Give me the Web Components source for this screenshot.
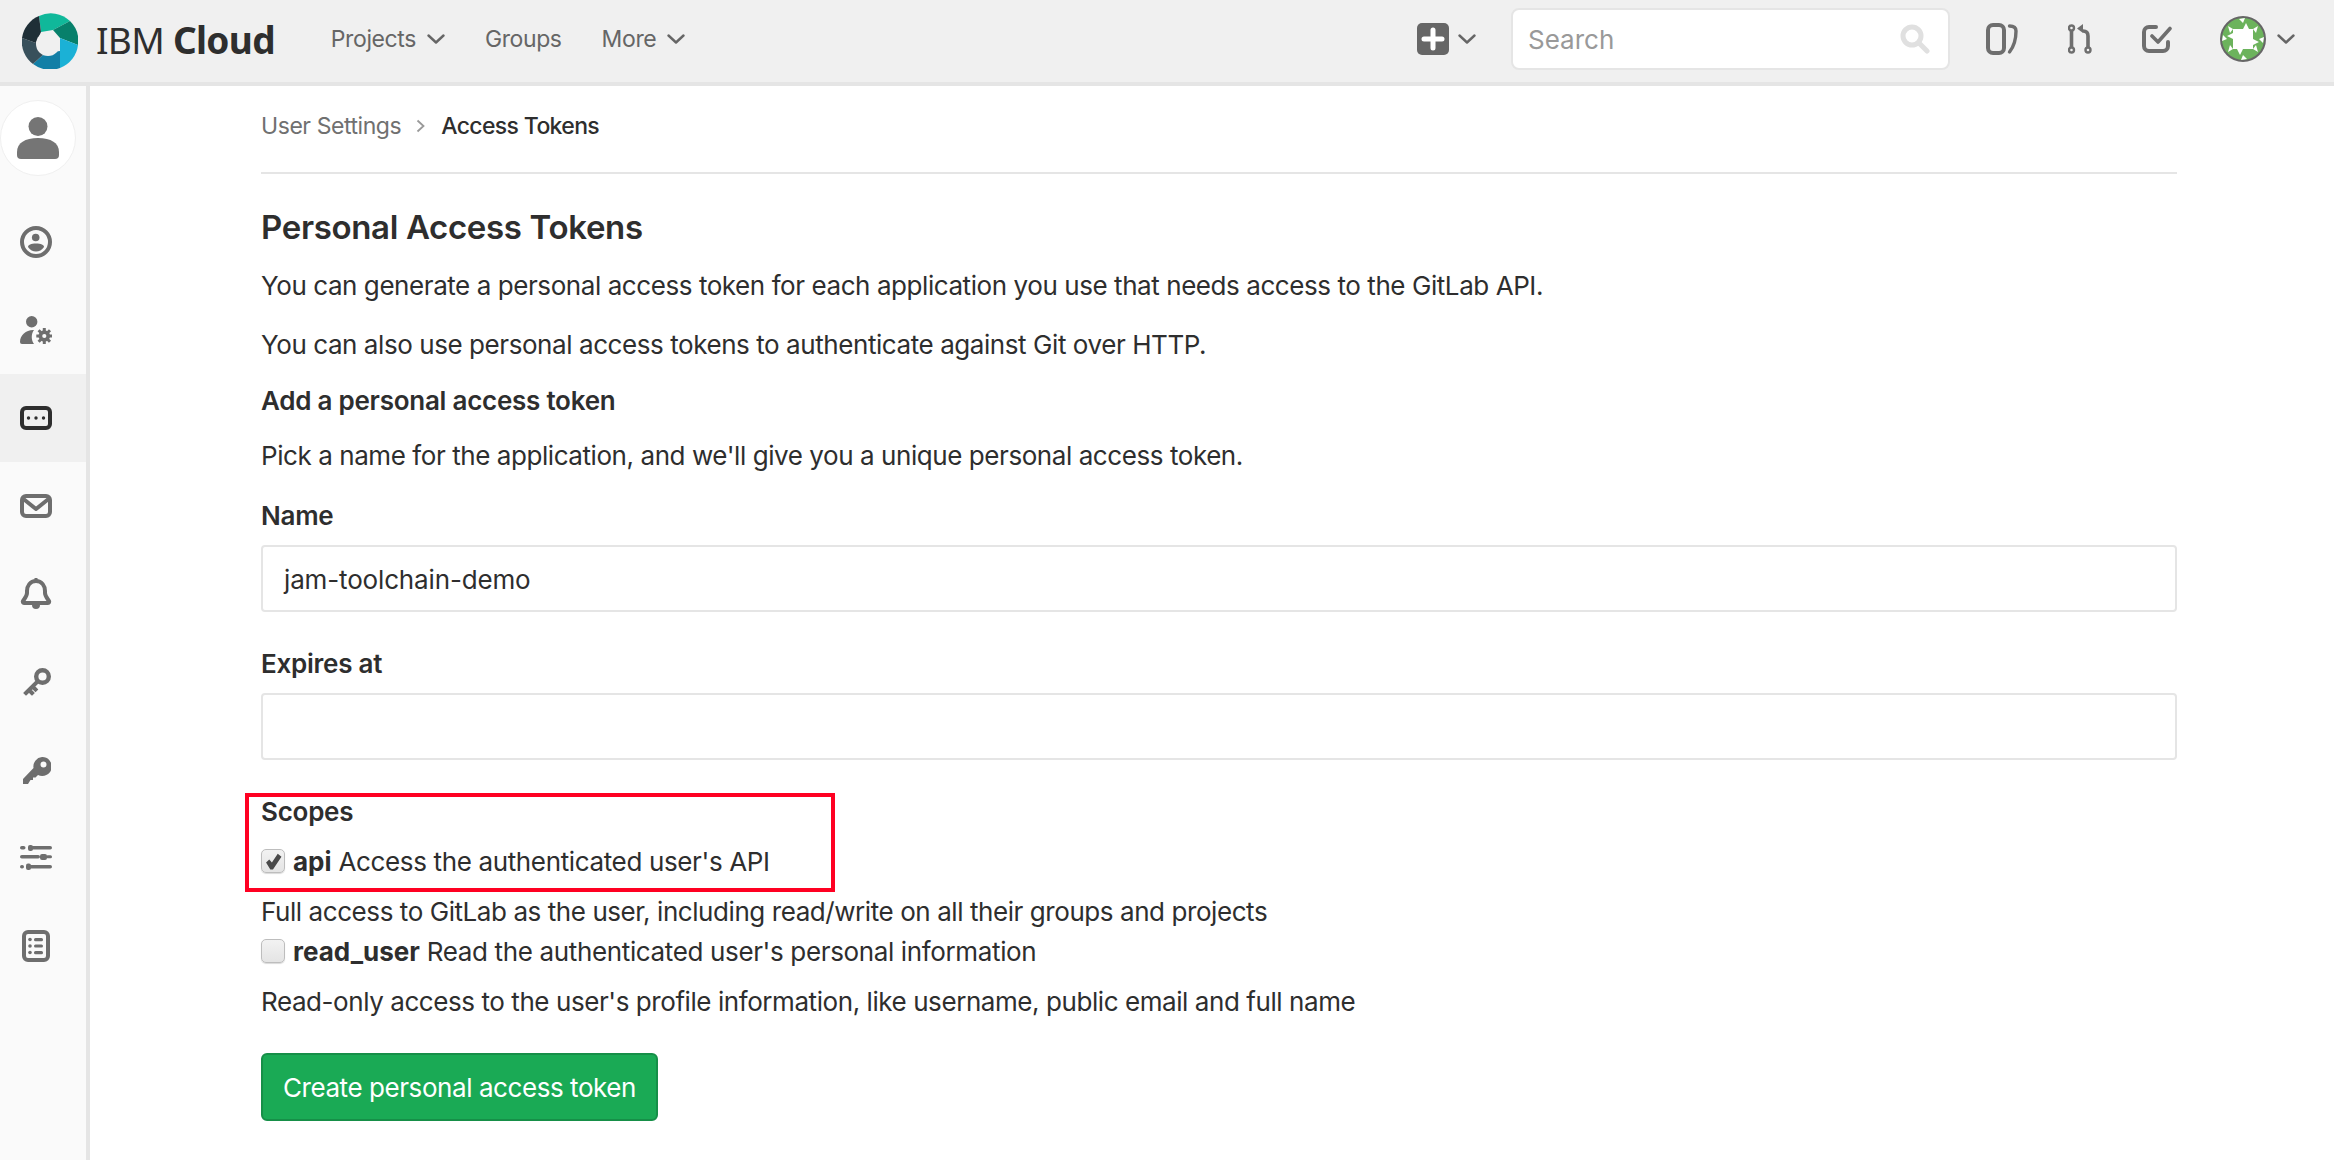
<!DOCTYPE html>
<html>
<head>
<meta charset="utf-8">
<title>Access Tokens</title>
<style>
    html, body { margin: 0; padding: 0; background: #fff; }
    body { font-family: Inter, "Liberation Sans", sans-serif; color: #2e2e2e; font-size: 26px; }
</style>
</head>
<body>
<app-shell>
    <top-bar slot="top"></top-bar>
    <side-nav slot="side"></side-nav>
    <token-page></token-page>
</app-shell>

<script>
const chevron = `<svg width="18" height="10" viewBox="0 0 18 10" fill="none" stroke="#666" stroke-width="2.4" stroke-linecap="round" stroke-linejoin="round"><path d="M1.5 1.5 9 8.5l7.5-7"/></svg>`;

class AppShell extends HTMLElement {
    constructor() {
        super();
        this.attachShadow({ mode: 'open' });
        this.shadowRoot.innerHTML = `
            <style>
                :host { display: block; height: 1160px; overflow: hidden; }
                .body { display: flex; height: 1074px; }
                main { flex: 1; min-width: 0; }
            </style>
            <slot name="top"></slot>
            <div class="body">
                <slot name="side"></slot>
                <main><slot></slot></main>
            </div>
        `;
    }
}

class NavLink extends HTMLElement {
    constructor() {
        super();
        this.attachShadow({ mode: 'open' });
        this.shadowRoot.innerHTML = `
            <style>
                :host { display: flex; align-items: center; gap: 11px; color: #666; font-size: 23px; letter-spacing: -0.4px; }
            </style>
            <slot></slot>
            ${this.hasAttribute('menu') ? chevron : ''}
        `;
    }
}

class TopBar extends HTMLElement {
    constructor() {
        super();
        this.attachShadow({ mode: 'open' });
        this.shadowRoot.innerHTML = `
            <style>
                :host {
                    display: flex; align-items: center; box-sizing: border-box; height: 86px;
                    background: #f0f0f0; border-bottom: 4px solid #e5e5e5; padding: 0 0 4px 22px;
                }
                .logo { margin-top: 4px; }
                .brand { margin-left: 18px; font: 37px "Noto Sans", sans-serif; letter-spacing: -0.7px; color: #2e2e2e; white-space: nowrap; }
                .brand b { font-weight: 700; }
                .links { display: flex; gap: 40px; margin-left: 56px; }
                .add { display: flex; align-items: center; gap: 9px; margin-left: auto; }
                .search {
                    box-sizing: border-box; display: flex; align-items: center; justify-content: space-between;
                    width: 439px; height: 62px; margin-left: 35px; padding: 0 18px 0 15px;
                    background: #fff; border: 2px solid #e5e5e5; border-radius: 8px;
                    color: #999; font-size: 26px;
                }
                .tools { display: flex; align-items: center; margin: 0 39px 0 36px; }
                .tools svg { display: block; }
                .mr { margin-left: 50px; }
                .todo { margin-left: 50px; }
                .me { margin-left: 48px; }
                .tools .chev { margin-left: 11px; }
            </style>
            <svg class="logo" width="56" height="56" viewBox="0 0 56 56">
                <path fill="#10b89a" d="M17 3A28 28 0 0 1 48 8L31 17 19 19Z"/>
                <path fill="#07806b" d="M48 8A28 28 0 0 1 56 32L38 25 31 17Z"/>
                <path fill="#1bb1d6" d="M56 32A28 28 0 0 1 38 55L38 38 38 25Z"/>
                <path fill="#137fa6" d="M38 55A28 28 0 0 1 11 51L23 40 38 38Z"/>
                <path fill="#38505b" d="M11 51A28 28 0 0 1 0 25L14 30 23 40Z"/>
                <path fill="#1f2f37" d="M0 25A28 28 0 0 1 17 3L19 19 14 30Z"/>
                <circle cx="26" cy="31" r="12" fill="#f0f0f0"/>
            </svg>
            <span class="brand">IBM <b>Cloud</b></span>
            <div class="links">
                <nav-link menu>Projects</nav-link>
                <nav-link>Groups</nav-link>
                <nav-link menu>More</nav-link>
            </div>
            <div class="add">
                <svg width="32" height="32" viewBox="0 0 32 32"><rect width="32" height="32" rx="5" fill="#666"/><path d="M16 7v18M7 16h18" stroke="#fff" stroke-width="5" stroke-linecap="round"/></svg>
                ${chevron}
            </div>
            <div class="search">
                <span>Search</span>
                <svg width="30" height="30" viewBox="0 0 30 30" fill="none" stroke="#e0e0e0"><circle cx="12" cy="12" r="9" stroke-width="5"/><path d="M19 19l8 8" stroke-width="5" stroke-linecap="round"/></svg>
            </div>
            <div class="tools">
                <svg width="32" height="32" viewBox="0 0 32 32" fill="none" stroke="#6e6e6e" stroke-width="4" stroke-linecap="round">
                    <rect x="2" y="2" width="16" height="28" rx="5"/>
                    <path d="M23.500 3Q30 3 30 8C30 16 27.500 24 23.500 29" stroke-width="3.400"/>
                </svg>
                <svg class="mr" width="24" height="30" viewBox="0 0 24 30" fill="none" stroke="#6e6e6e" stroke-width="2.400">
                    <circle cx="3.500" cy="4" r="2.500"/><circle cx="3.500" cy="26" r="2.500"/><circle cx="20" cy="26" r="2.500"/>
                    <path d="M3.500 7v16M20 23V12q0-5-5-5" stroke-width="3.600"/>
                    <path d="M9 4.500 15 0v9z" fill="#6e6e6e" stroke="none"/>
                </svg>
                <svg class="todo" width="30" height="28" viewBox="0 0 30 28" fill="none" stroke="#6e6e6e" stroke-width="4" stroke-linecap="round" stroke-linejoin="round">
                    <path d="M14 2H7a5 5 0 0 0-5 5v14a5 5 0 0 0 5 5h14a5 5 0 0 0 5-5v-4"/>
                    <path d="M10 11l6 6L28 3.500" stroke-width="3.600"/>
                </svg>
                <svg class="me" width="46" height="46" viewBox="0 0 46 46">
                    <circle cx="23" cy="23" r="22" fill="#6cb35c" stroke="#666" stroke-width="2"/>
                    <rect x="13" y="13" width="20" height="20" fill="#fff"/>
                    <path fill="#fff" d="M13 17v6l-6-3zM33 23v6l6-3zM23 13h6l-3-6zM17 33h6l-3 6zM13 13 8 10l2 7zM33 13l5-3-2 7zM13 33l-5 3 2-7zM33 33l5 3-2-7zM3 19l4 4-5 2zM43 27l-4-4 5-2zM19 3l4 4 2-5zM27 43l-4-4-2 5z"/>
                </svg>
                <span class="chev">${chevron}</span>
            </div>
        `;
    }
}

class SideItem extends HTMLElement {
    constructor() {
        super();
        this.attachShadow({ mode: 'open' });
        this.shadowRoot.innerHTML = `
            <style>
                :host { display: flex; align-items: center; height: 88px; padding-left: 20px; }
                :host([active]) { background: #f0f0f0; }
            </style>
            <slot></slot>
        `;
    }
}

class SideNav extends HTMLElement {
    constructor() {
        super();
        this.attachShadow({ mode: 'open' });
        const s = 'fill="none" stroke="#6e6e6e" stroke-width="4"';
        this.shadowRoot.innerHTML = `
            <style>
                :host {
                    display: block; flex: none; box-sizing: border-box; width: 90px; height: 100%;
                    background: #fafafa; border-right: 4px solid #e5e5e5; padding-top: 14px;
                }
                .avatar {
                    display: flex; align-items: center; justify-content: center;
                    box-sizing: border-box; width: 76px; height: 76px; margin-bottom: 22px;
                    background: #fff; border: 1px solid #f0f0f0; border-radius: 50%;
                }
                svg { display: block; }
            </style>
            <div class="avatar">
                <svg width="42" height="42" viewBox="0 0 42 42" fill="#757575">
                    <ellipse cx="21" cy="9.500" rx="9.500" ry="9.500"/>
                    <path d="M0 35c0-9 8-14 21-14s21 5 21 14v3a4 4 0 0 1-4 4H4a4 4 0 0 1-4-4z"/>
                </svg>
            </div>
            <side-item>
                <svg width="32" height="32" viewBox="0 0 32 32">
                    <circle cx="16" cy="16" r="14" ${s}/>
                    <circle cx="15.700" cy="11.500" r="3.800" fill="#6e6e6e"/>
                    <path d="M8 21c0-2 3-3.500 8-3.500s8 1.500 8 3.500c-2 3-5 4.500-8 4.500s-6-1.500-8-4.500z" fill="#6e6e6e"/>
                </svg>
            </side-item>
            <side-item>
                <svg width="32" height="28" viewBox="0 0 32 28" fill="#6e6e6e">
                    <circle cx="11.700" cy="5.700" r="5.700"/>
                    <path d="M0 26c0-7 6-12 13-12h1c-3 4-3 10 0 14H2a2 2 0 0 1-2-2z"/>
                    <circle cx="24.300" cy="20" r="5.800"/>
                    <path d="M24.300 12v16M16.300 20h16M18.600 14.300l11.400 11.400M18.600 25.700l11.400-11.400" stroke="#6e6e6e" stroke-width="3"/>
                    <circle cx="24.300" cy="20" r="2.100" fill="#fafafa"/>
                </svg>
            </side-item>
            <side-item active>
                <svg width="32" height="24" viewBox="0 0 32 24">
                    <rect x="2" y="2" width="28" height="20" rx="4" fill="none" stroke="#2e2e2e" stroke-width="4"/>
                    <circle cx="8.500" cy="12" r="1.700" fill="#2e2e2e"/><circle cx="16" cy="12" r="1.700" fill="#2e2e2e"/><circle cx="23.500" cy="12" r="1.700" fill="#2e2e2e"/>
                </svg>
            </side-item>
            <side-item>
                <svg width="32" height="24" viewBox="0 0 32 24" ${s} stroke-linejoin="round">
                    <rect x="2" y="2" width="28" height="20" rx="4"/>
                    <path d="M3.500 5 16 15 28.500 5"/>
                </svg>
            </side-item>
            <side-item>
                <svg width="32" height="32" viewBox="0 0 32 32">
                    <path ${s} stroke-linejoin="round" d="M16 3c-6 0-9 5-9 10v2c0 3-2 5-4 8-.5 1 0 2 1 2h24c1 0 1.500-1 1-2-2-3-4-5-4-8v-2c0-5-3-10-9-10z"/>
                    <path d="M12 27h8a4 4 0 0 1-8 0zM14.500 0h3v3h-3z" fill="#6e6e6e"/>
                </svg>
            </side-item>
            <side-item>
                <svg width="28" height="29" viewBox="0 0 28 29" ${s} stroke-linecap="square" style="margin-left:3px">
                    <circle cx="19.500" cy="8.500" r="6.300" stroke-width="4.400"/>
                    <path d="M14.500 13.500 3 25M6 22l3 3M9.500 18.500l3 3" stroke-width="4"/>
                </svg>
            </side-item>
            <side-item>
                <svg width="28" height="27" viewBox="0 0 28 27" fill="#6e6e6e" style="margin-left:3px">
                    <path fill-rule="evenodd" d="M19 0a9.500 9.500 0 1 1-4 18l-2.500 2.500H10v2.500H7.500L5 27H0v-5L10.500 11A9.500 9.500 0 0 1 19 0zm1.500 4.500a3 3 0 1 0 0 6 3 3 0 0 0 0-6z"/>
                </svg>
            </side-item>
            <side-item>
                <svg width="32" height="26" viewBox="0 0 32 26" fill="#6e6e6e">
                    <rect y="1" width="5.500" height="3.600" rx="1.800"/><rect x="8" y="0" width="5" height="6" rx="2"/><rect x="11" y="1" width="21" height="3.600" rx="1.800"/>
                    <rect y="10" width="20" height="3.600" rx="1.800"/><rect x="20" y="9" width="7" height="6" rx="2"/><rect x="26" y="10.200" width="6" height="3" rx="1.500"/>
                    <rect y="20" width="4" height="3.600" rx="1.800"/><rect x="6" y="18.500" width="5" height="6.500" rx="2"/><rect x="9" y="20" width="23" height="3.600" rx="1.800"/>
                </svg>
            </side-item>
            <side-item>
                <svg width="28" height="32" viewBox="0 0 28 32" style="margin-left:2px">
                    <rect x="2" y="2" width="24" height="28" rx="4" ${s}/>
                    <g fill="#6e6e6e">
                        <circle cx="8" cy="9.500" r="1.800"/><circle cx="8" cy="16" r="1.800"/><circle cx="8" cy="22.500" r="1.800"/>
                        <rect x="12" y="8" width="9" height="3.200" rx="1.500"/><rect x="12" y="14.400" width="9" height="3.200" rx="1.500"/><rect x="12" y="21" width="9" height="3.200" rx="1.500"/>
                    </g>
                </svg>
            </side-item>
        `;
    }
}

class BreadCrumbs extends HTMLElement {
    constructor() {
        super();
        this.attachShadow({ mode: 'open' });
        this.shadowRoot.innerHTML = `
            <style>
                :host {
                    display: flex; align-items: center; box-sizing: border-box; height: 88px;
                    border-bottom: 2px solid #e5e5e5; font-size: 23px; color: #707070; padding-bottom: 6px;
                }
                svg { margin: 0 16px 0 15px; }
                b { font-weight: 500; color: #2e2e2e; letter-spacing: -0.65px; }
            </style>
            <span>User Settings</span>
            <svg width="9" height="14" viewBox="0 0 9 14" fill="none" stroke="#999" stroke-width="1.800"><path d="M1.500 1.500 7.500 7l-6 5.500"/></svg>
            <b>Access Tokens</b>
        `;
    }
}

class TextField extends HTMLElement {
    constructor() {
        super();
        this.attachShadow({ mode: 'open' });
        this.shadowRoot.innerHTML = `
            <style>
                :host {
                    display: flex; align-items: center; box-sizing: border-box; height: 67px;
                    padding: 2px 21px 0; background: #fff; border: 2px solid #e5e5e5; border-radius: 4px;
                    font-size: 26px; letter-spacing: -0.15px; color: #2e2e2e;
                }
            </style>
            <slot></slot>
        `;
    }
}

class CheckMark extends HTMLElement {
    constructor() {
        super();
        this.attachShadow({ mode: 'open' });
        this.shadowRoot.innerHTML = `
            <style>
                :host {
                    display: inline-flex; align-items: center; justify-content: center; flex: none;
                    box-sizing: border-box; width: 24px; height: 24px; border-radius: 5px;
                    background: linear-gradient(#f2f2f2, #e4e4e4); border: 1px solid #bdbdbd;
                    box-shadow: 0 1px 1px rgba(0,0,0,.15);
                }
            </style>
            ${this.hasAttribute('checked') ? `<svg width="17" height="17" viewBox="0 0 16 16"><path d="M1 9 4 6l2.500 3L12 .8l3.500 2.700L7.500 15.500H5z" fill="#4a4a4a"/></svg>` : ''}
        `;
    }
}

class ScopeRow extends HTMLElement {
    constructor() {
        super();
        this.attachShadow({ mode: 'open' });
        this.shadowRoot.innerHTML = `
            <style>
                :host { display: flex; align-items: center; gap: 8px; height: 36px; font-size: 26px; letter-spacing: -0.36px; color: #2e2e2e; }
                span { padding-top: 1px; }
                b { font-weight: 700; letter-spacing: 0; }
            </style>
            <check-mark ${this.hasAttribute('checked') ? 'checked' : ''}></check-mark>
            <span><b>${this.getAttribute('name')}</b> <slot></slot></span>
        `;
    }
}

class TokenPage extends HTMLElement {
    constructor() {
        super();
        this.attachShadow({ mode: 'open' });
        this.shadowRoot.innerHTML = `
            <style>
                :host { display: block; padding: 0 157px 0 171px; font-size: 26px; line-height: 36px; letter-spacing: -0.43px; color: #2e2e2e; }
                h1 { margin: 32px 0 0; padding-top: 1px; box-sizing: border-box; height: 40px; font-size: 33px; line-height: 40px; font-weight: 600; letter-spacing: -0.34px; }
                p, label { display: block; margin: 0; box-sizing: border-box; height: 36px; padding-top: 1px; white-space: nowrap; }
                label { font-weight: 600; letter-spacing: -0.25px; }
                .scopes { position: relative; margin-top: 33px; }
                .mark {
                    position: absolute; left: -16px; top: 0; width: 590px; height: 99px;
                    box-sizing: border-box; border: 4px solid #ff0022; pointer-events: none;
                }
                button {
                    display: block; margin-top: 34px; box-sizing: border-box; width: 397px; height: 68px;
                    padding: 1px 0 0; background: #1aaa55; border: 2px solid #168f48; border-radius: 6px;
                    font: inherit; letter-spacing: inherit; color: #fff;
                }
            </style>
            <bread-crumbs></bread-crumbs>
            <h1>Personal Access Tokens</h1>
            <p style="margin-top:21px">You can generate a personal access token for each application you use that needs access to the GitLab API.</p>
            <p style="margin-top:23px">You can also use personal access tokens to authenticate against Git over HTTP.</p>
            <label style="margin-top:20px">Add a personal access token</label>
            <p style="margin-top:19px">Pick a name for the application, and we'll give you a unique personal access token.</p>
            <label style="margin-top:24px">Name</label>
            <text-field style="margin-top:12px">jam-toolchain-demo</text-field>
            <label style="margin-top:33px">Expires at</label>
            <text-field style="margin-top:12px"></text-field>
            <div class="scopes">
                <div class="mark"></div>
                <label>Scopes</label>
                <scope-row name="api" checked style="margin-top:14px">Access the authenticated user's API</scope-row>
            </div>
            <p style="margin-top:14px">Full access to GitLab as the user, including read/write on all their groups and projects</p>
            <scope-row name="read_user" style="margin-top:4px">Read the authenticated user's personal information</scope-row>
            <p style="margin-top:14px">Read-only access to the user's profile information, like username, public email and full name</p>
            <button>Create personal access token</button>
        `;
    }
}

customElements.define('check-mark', CheckMark);
customElements.define('nav-link', NavLink);
customElements.define('side-item', SideItem);
customElements.define('bread-crumbs', BreadCrumbs);
customElements.define('text-field', TextField);
customElements.define('scope-row', ScopeRow);
customElements.define('top-bar', TopBar);
customElements.define('side-nav', SideNav);
customElements.define('token-page', TokenPage);
customElements.define('app-shell', AppShell);
</script>
</body>
</html>
